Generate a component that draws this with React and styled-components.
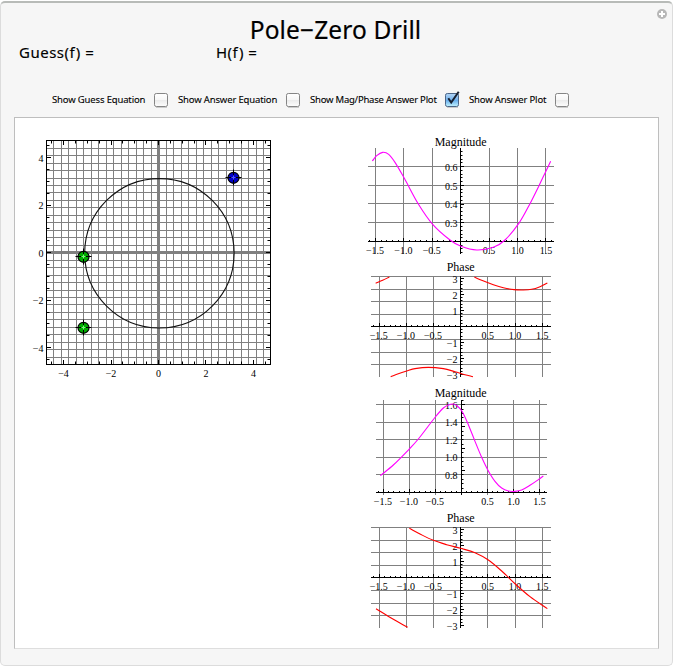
import React, { useState } from "react";
import styled, { createGlobalStyle } from "styled-components";

const GlobalStyle = createGlobalStyle`
  body { margin: 0; background: #fff; font-family: "Noto Sans", "Open Sans", sans-serif; color: #000; }
  * { box-sizing: border-box; }
`;

const Frame = styled.main`
  width: 673px;
  height: 665px;
  margin-top: 1px;
  padding: 13px 13px 16px;
  background: #f6f6f6;
  border: 1px solid #dcdcdc;
  border-top: 2px solid #b8bbb8;
  border-radius: 5px;
  display: flex;
  flex-direction: column;
`;

const TitleRow = styled.header`
  display: grid;
  grid-template-columns: 1fr auto 1fr;
  align-items: center;
  height: 28px;
`;

const Title = styled.h1`
  grid-column: 2;
  margin: 0 0 0 -2px;
  font-size: 24.5px;
  line-height: 28px;
  font-weight: 400;
  letter-spacing: 0.15px;
  white-space: pre;
  -webkit-text-stroke: 0.2px #000;
`;

const AddButton = styled.button`
  justify-self: end;
  align-self: start;
  width: 12px;
  height: 12px;
  margin: -8px -9px 0 0;
  padding: 0;
  border: 0;
  background: none;
  svg { display: block; }
`;

const Equations = styled.section`
  display: grid;
  grid-template-columns: 197px auto;
  height: 20px;
  margin-top: -2px;
  padding-left: 5px;
  font-size: 15px;
  line-height: 20px;
  letter-spacing: 0.5px;
  -webkit-text-stroke: 0.15px #000;
`;

const Options = styled.section`
  display: flex;
  align-items: center;
  height: 15px;
  margin-top: 31px;
  padding-left: 38px;
  gap: 9px;
`;

const Option = styled.label`
  display: flex;
  align-items: center;
  justify-content: space-between;
  width: ${(p) => p.$width}px;
  font-size: 9.5px;
  line-height: 14px;
  white-space: nowrap;
  letter-spacing: ${(p) => p.$spacing}px;
  -webkit-text-stroke: 0.1px #000;
`;

const OptionText = styled.span`
  margin-top: -1px;
`;

const HiddenInput = styled.input`
  appearance: none;
  width: 0;
  height: 0;
  margin: 0;
`;

const CheckIcon = styled.svg`
  display: block;
  flex: none;
  overflow: visible;
`;

const Panel = styled.section`
  margin-top: 9px;
  height: 532px;
  flex: none;
  background: #fff;
  border: 1px solid #bebebe;
  border-bottom-color: #dedede;
  display: flex;
  align-items: flex-start;
  gap: 75px;
  padding: 12px 0 0 15px;
`;

const PlotColumn = styled.div`
  display: flex;
  flex-direction: column;
`;

const Plot = styled.svg`
  display: block;
  flex: none;
  text { font-family: "Liberation Serif", serif; font-size: 10px; fill: #000; }
  .title { font-size: 12px; }
`;

const minus = (v) => String(v).replace("-", "\u2212");

function smooth(points) {
  const p = points.map(([x, y]) => [x / 3, y / 3]);
  const slope = (i) => {
    const a = p[Math.max(i - 1, 0)];
    const b = p[Math.min(i + 1, p.length - 1)];
    return (b[1] - a[1]) / (b[0] - a[0]);
  };
  let d = `M${p[0]}`;
  for (let i = 0; i < p.length - 1; i++) {
    const [x1, y1] = p[i];
    const [x2, y2] = p[i + 1];
    const h = (x2 - x1) / 3;
    d += `C${x1 + h},${y1 + h * slope(i)} ${x2 - h},${y2 - h * slope(i + 1)} ${x2},${y2}`;
  }
  return d;
}

function CheckBox({ id, checked }) {
  return (
    <CheckIcon width="15" height="15" viewBox="0 0 15 15">
      <defs>
        <linearGradient id={id} x2="0" y2="1">
          <stop offset="0" stopColor={checked ? "#b4d6f5" : "#fff"} />
          <stop offset="0.48" stopColor={checked ? "#78b5ee" : "#f7f7f7"} />
          <stop offset="0.52" stopColor={checked ? "#67adec" : "#ebebeb"} />
          <stop offset="1" stopColor={checked ? "#c3f4ff" : "#fdfdfd"} />
        </linearGradient>
      </defs>
      <path d="M2 14.5H13" stroke="#ccc" />
      <rect x="0.5" y="0.5" width="13" height="13" rx="1.8" fill={`url(#${id})`} stroke={checked ? "#4c6688" : "#858585"} />
      {checked && <path d="M3.3 5.2L6.2 9.5L13.7-1.3" fill="none" stroke="#17202f" strokeWidth="2" />}
    </CheckIcon>
  );
}

const OPTIONS = [
  { label: "Show Guess Equation", width: 117, spacing: -0.15 },
  { label: "Show Answer Equation", width: 123, spacing: -0.15 },
  { label: "Show Mag/Phase Answer Plot", width: 150, spacing: -0.22, on: true },
  { label: "Show Answer Plot", width: 101, spacing: -0.15 },
];

function OptionBox({ option, index }) {
  const [on, setOn] = useState(!!option.on);
  return (
    <Option $width={option.width} $spacing={option.spacing}>
      <OptionText>{option.label}</OptionText>
      <HiddenInput type="checkbox" checked={on} onChange={() => setOn(!on)} />
      <CheckBox id={`box${index}`} checked={on} />
    </Option>
  );
}

function Marker({ x, y, color, glow }) {
  return (
    <g>
      <circle cx={x} cy={y + 0.3} r="5.5" fill={color} stroke="#000" strokeWidth="1.2" />
      <path d={`M${x - 8} ${y}H${x - 2}M${x + 2} ${y}H${x + 8}M${x} ${y - 8}V${y - 2}M${x} ${y + 2}V${y + 8}`} stroke="#000" />
      <path d={`M${x - 2} ${y}H${x + 2}M${x} ${y - 2}V${y + 2}`} stroke={glow} />
    </g>
  );
}

const GRID = Array.from({ length: 29 }, (_, i) => i - 14).filter((k) => k !== 0);
const FRAME_TICKS = Array.from({ length: 19 }, (_, i) => i - 9);

function PolePlot() {
  const cx = 123.5;
  const cy = 122.7;
  return (
    <Plot width="255" height="255" viewBox="-5 0 255 255">
      <g stroke="#808080" strokeWidth="1">
        {GRID.map((k) => (
          <React.Fragment key={k}>
            <path d={`M${Math.floor(cx + k * 7.5) + 0.5} 11V234`} />
            <path d={`M12 ${Math.floor(cy + k * 7.47) + 0.5}H235`} />
          </React.Fragment>
        ))}
        <path d="M123.5 11V234M12 122.5H235" strokeWidth="3" />
      </g>
      <rect x="11.5" y="10.5" width="224" height="224" fill="none" stroke="#000" />
      <g stroke="#000">
        {FRAME_TICKS.map((k) => {
          const l = k % 4 === 0 ? 4 : 2.5;
          const x = Math.floor(cx + k * 11.87) + 0.5;
          const y = Math.floor(cy + k * 11.87) + 0.5;
          return <path key={k} d={`M${x} 11v${l}M${x} 234v${-l}M12 ${y}h${l}M235 ${y}h${-l}`} />;
        })}
      </g>
      <circle cx="124.4" cy="123.3" r="74.7" fill="none" stroke="#111" strokeWidth="1.1" />
      <Marker x={48.5} y={126.5} color="#00ad00" glow="#7f7" />
      <Marker x={48.5} y={197.5} color="#00ad00" glow="#7f7" />
      <Marker x={198.5} y={47.5} color="#0000c8" glow="#55f" />
      {[-4, -2, 0, 2, 4].map((v) => (
        <React.Fragment key={v}>
          <text x={cx + v * 23.75} y="247" textAnchor="middle">{minus(v)}</text>
          <text x="8.5" y={cy - v * 23.75 + 4} textAnchor="end">{minus(v)}</text>
        </React.Fragment>
      ))}
    </Plot>
  );
}

function Chart({ c }) {
  const xs = [-1.5, -1, -0.5, 0.5, 1, 1.5];
  const px = (v) => Math.floor(c.x0 + v * c.sx) + 0.5;
  const y0 = c.axisY + 0.5;
  const ticks = [];
  for (let k = -16; k <= 16; k++) {
    const x = px(k / 10);
    if (x > c.left && x < c.right) ticks.push(`M${x} ${y0}v${k % 5 ? -1.5 : -3.5}`);
  }
  for (let k = -40; k <= 40; k++) {
    const y = y0 - k * c.minor;
    if (y > c.top && y < c.bottom) ticks.push(`M${px(0)} ${Math.floor(y) + 0.5}h${k % 5 ? 2 : 3.5}`);
  }
  return (
    <Plot width="200" height={c.height} viewBox={`0 0 200 ${c.height}`}>
      <path
        d={xs.map((v) => `M${px(v)} ${c.top}V${c.bottom}`).join("") + c.grid.map((y) => `M${c.left} ${y + 0.5}H${c.right}`).join("")}
        stroke="#808080"
      />
      <path d={`M${c.left} ${y0}H${c.right}M${px(0)} ${c.top}V${c.bottom}` + ticks.join("")} stroke="#000" />
      <text className="title" x="100.7" y={c.titleY} textAnchor="middle">{c.title}</text>
      {xs.map((v) => (
        <text key={v} x={c.x0 + v * c.sx - (v < 0 ? 0.5 : 0)} y={c.labelY} textAnchor="middle">{minus(v.toFixed(1))}</text>
      ))}
      {c.labels.map(([t, y]) => (
        <text key={t} x="97.5" y={y} textAnchor="end">{minus(t)}</text>
      ))}
      {c.curves.map((p, i) => <path key={i} d={smooth(p)} fill="none" stroke={c.color} strokeWidth="1.1" />)}
    </Plot>
  );
}

const magnitude = { title: "Magnitude", color: "#ff00ff" };
const phase = {
  title: "Phase", color: "#ff0000", x0: 100.7, sx: 54.3, left: 11, right: 191, height: 126, minor: 3.2,
};

const CHARTS = [
  {
    ...magnitude, x0: 100.7, sx: 56.8, left: 8, right: 194, top: 18, bottom: 124, height: 128,
    axisY: 111, minor: 3.74, grid: [36, 55, 73, 92], titleY: 16, labelY: 124,
    labels: [["0.6", 41], ["0.5", 59.5], ["0.4", 78], ["0.3", 97]],
    curves: [[[37,93],[50,77],[68,67],[86,73],[105,97],[133,145],[175,222],[218,283],[270,330],[303,349],[350,360],[400,352],[435,330],[478,278],[510,221],[538,165],[557,125],[572,94]]],
  },
  {
    ...phase, top: 18, bottom: 119, axisY: 68, grid: [18, 31, 43, 56, 81, 94, 106], titleY: 13, labelY: 81,
    labels: [["3", 25], ["2", 41], ["1", 57], ["-1", 89], ["-2", 105], ["-3", 121]],
    curves: [
      [[47,76],[68,67],[88,57]],
      [[343,57],[365,67],[400,80],[430,89],[462,95],[490,96],[515,94],[540,86],[562,75]],
      [[92,356],[115,347],[140,339],[165,332],[205,328],[250,332],[285,341],[315,350],[339,356]],
    ],
  },
  {
    ...magnitude, x0: 101.4, sx: 52, left: 16, right: 187, top: 16, bottom: 111, height: 126,
    axisY: 108, minor: 4.39, grid: [20, 38, 55, 73, 90], titleY: 13, labelY: 121,
    labels: [["1.6", 25], ["1.4", 42], ["1.2", 60], ["1.0", 77], ["0.8", 95]],
    curves: [[[61,275],[100,243],[148,195],[175,165],[226,99],[250,72],[265,63],[280,60],[292,66],[306,82],[325,122],[345,172],[365,220],[383,257],[405,292],[425,312],[445,321],[465,322],[485,318],[510,304],[535,287],[550,276]]],
  },
  {
    ...phase, top: 17, bottom: 118, axisY: 67, grid: [17, 30, 42, 55, 80, 93, 105], titleY: 12, labelY: 80,
    labels: [["3", 24], ["2", 40], ["1", 56], ["-1", 88], ["-2", 104], ["-3", 120]],
    curves: [
      [[148,55],[180,72],[220,91],[260,104],[302,115],[345,128],[385,150],[425,183],[466,222],[510,260],[562,296]],
      [[48,296],[100,328],[143,352]],
    ],
  },
];

export default function App() {
  return (
    <>
      <GlobalStyle />
      <Frame>
        <TitleRow>
          <Title>Pole−Zero Drill</Title>
          <AddButton aria-label="Add">
            <svg width="12" height="12" viewBox="0 0 12 12">
              <circle cx="6" cy="6" r="5" fill="#b7b7b7" />
              <path d="M6 3V9M3 6H9" stroke="#fff" strokeWidth="2" />
            </svg>
          </AddButton>
        </TitleRow>
        <Equations>
          <span>Guess(f) =</span>
          <span>H(f) =</span>
        </Equations>
        <Options>
          {OPTIONS.map((o, i) => <OptionBox key={o.label} option={o} index={i} />)}
        </Options>
        <Panel>
          <PolePlot />
          <PlotColumn>
            {CHARTS.map((c, i) => <Chart key={i} c={c} />)}
          </PlotColumn>
        </Panel>
      </Frame>
    </>
  );
}
